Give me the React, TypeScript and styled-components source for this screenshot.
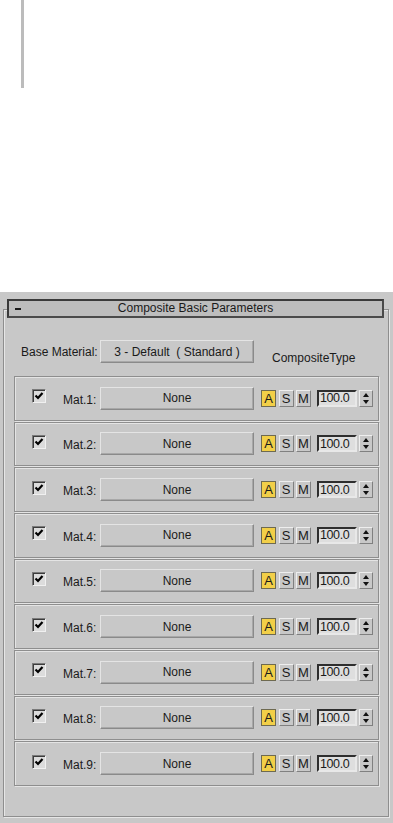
import styled, { createGlobalStyle } from 'styled-components';

const GlobalStyle = createGlobalStyle`
	html, body {
		margin: 0;
		padding: 0;
		background: #ffffff;
	}
	body {
		font-family: 'Liberation Sans', Arial, sans-serif;
		font-size: 12px;
		color: #1a1a1a;
	}
`;

const Page = styled.div`
	display: flex;
	flex-direction: column;
	width: 393px;
	height: 823px;
	overflow: hidden;
`;

const TopStrip = styled.div`
	height: 292px;
	padding-left: 21px;
	box-sizing: border-box;
`;

const Splitter = styled.div`
	width: 3px;
	height: 88px;
	background: #bcbcbc;
`;

const Panel = styled.div`
	flex: 1;
	background: #c8c8c8;
	padding: 17px 4px 6px 3px;
	box-sizing: border-box;
	display: flex;
	flex-direction: column;
`;

const Rollout = styled.div`
	flex: 1;
	border: 1px solid #8e8e8e;
	box-shadow: inset 1px 1px 0 #e6e6e6, 1px 1px 0 #e6e6e6;
	display: flex;
	flex-direction: column;
`;

const Header = styled.div`
	margin: -11px 4px 0 3px;
	height: 19px;
	box-sizing: border-box;
	border: 2px solid #3a3a3a;
	border-right-color: #4a4a4a;
	border-bottom-color: #4a4a4a;
	background: #bdbdbd;
	display: flex;
	align-items: center;
	line-height: 15px;
`;

const Collapse = styled.span`
	width: 6px;
	height: 2px;
	margin-left: 6px;
	background: #1a1a1a;
`;

const HeaderTitle = styled.span`
	flex: 1;
	text-align: center;
	padding-right: 12px;
`;

const BaseRow = styled.div`
	display: flex;
	align-items: center;
	margin: 22px 0 0 17px;
	height: 23px;
`;

const BaseLabel = styled.span`
	width: 79px;
`;

const ParamButton = styled.div<{ $w: number }>`
	width: ${(p) => p.$w}px;
	height: 23px;
	box-sizing: border-box;
	border: 1px solid;
	border-color: #e4e4e4 #8a8a8a #8a8a8a #e4e4e4;
	box-shadow: inset -1px -1px 0 #a8a8a8;
	background: #c8c8c8;
	display: flex;
	align-items: center;
	justify-content: center;
`;

const CompositeType = styled.span`
	margin: 12px 0 0 18px;
`;

const Groups = styled.div`
	margin: 13px 9px 0 10px;
	height: 410px;
	display: grid;
	grid-template-rows: repeat(9, 1fr);
	gap: 1px;
`;

const Group = styled.div`
	border: 1px solid #8e8e8e;
	box-shadow: inset 1px 1px 0 #e4e4e4, 1px 1px 0 #e4e4e4;
	display: flex;
	align-items: center;
	padding-left: 17px;
`;

const CheckBox = styled.div`
	width: 14px;
	height: 14px;
	box-sizing: border-box;
	border: 1px solid;
	border-color: #7a7a7a #f0f0f0 #f0f0f0 #7a7a7a;
	box-shadow: inset 1px 1px 0 #3c3c3c;
	background: #dcdcdc;
	margin-top: -4px;
	display: flex;
	align-items: center;
	justify-content: center;
`;

const MatLabel = styled.span`
	width: 37px;
	margin-left: 17px;
	margin-top: 3px;
`;

const ToggleButton = styled.div<{ $on?: boolean; $first?: boolean }>`
	width: 15px;
	height: 17px;
	box-sizing: border-box;
	border: 1px solid;
	border-color: ${(p) => (p.$on ? '#6e6a50' : '#eeeeee #808080 #808080 #eeeeee')};
	background: ${(p) => (p.$on ? '#f2cf48' : '#c8c8c8')};
	display: flex;
	align-items: center;
	justify-content: center;
	font-size: 13px;
	margin-left: ${(p) => (p.$first ? '7px' : '2.5px')};
`;

const SpinField = styled.div`
	width: 40px;
	height: 17px;
	box-sizing: border-box;
	margin-left: 6px;
	border: 2px solid;
	border-color: #2e2e2e #e8e8e8 #e8e8e8 #2e2e2e;
	background: #dedede;
	display: flex;
	align-items: center;
	padding-left: 1px;
	font-size: 12.5px;
	letter-spacing: -0.4px;
`;

const SpinArrows = styled.div`
	width: 14px;
	height: 17px;
	box-sizing: border-box;
	margin-left: 2px;
	border: 1px solid;
	border-color: #eeeeee #808080 #808080 #eeeeee;
	display: flex;
	align-items: center;
	justify-content: center;
`;

const Check = () => (
	<svg width="10" height="10" viewBox="0 0 10 10">
		<path d="M1.5 4.5 L4 7 L8.5 2" stroke="#000" strokeWidth="2.2" fill="none" />
	</svg>
);

const Arrows = () => (
	<svg width="8" height="13" viewBox="0 0 8 13">
		<path d="M4 1 L7 5 L1 5 Z" fill="#111" />
		<path d="M1 8 L7 8 L4 12 Z" fill="#111" />
	</svg>
);

const mats = [1, 2, 3, 4, 5, 6, 7, 8, 9];

export default function App() {
	return (
		<>
			<GlobalStyle />
			<Page>
				<TopStrip>
					<Splitter />
				</TopStrip>
				<Panel>
					<Rollout>
						<Header>
							<Collapse />
							<HeaderTitle>Composite Basic Parameters</HeaderTitle>
						</Header>
						<BaseRow>
							<BaseLabel>Base Material:</BaseLabel>
							<ParamButton $w={154}>3 - Default&nbsp; ( Standard )</ParamButton>
							<CompositeType>CompositeType</CompositeType>
						</BaseRow>
						<Groups>
							{mats.map((n) => (
								<Group key={n}>
									<CheckBox>
										<Check />
									</CheckBox>
									<MatLabel>Mat.{n}:</MatLabel>
									<ParamButton $w={154}>None</ParamButton>
									<ToggleButton $on $first>
										A
									</ToggleButton>
									<ToggleButton>S</ToggleButton>
									<ToggleButton>M</ToggleButton>
									<SpinField>100.0</SpinField>
									<SpinArrows>
										<Arrows />
									</SpinArrows>
								</Group>
							))}
						</Groups>
					</Rollout>
				</Panel>
			</Page>
		</>
	);
}
